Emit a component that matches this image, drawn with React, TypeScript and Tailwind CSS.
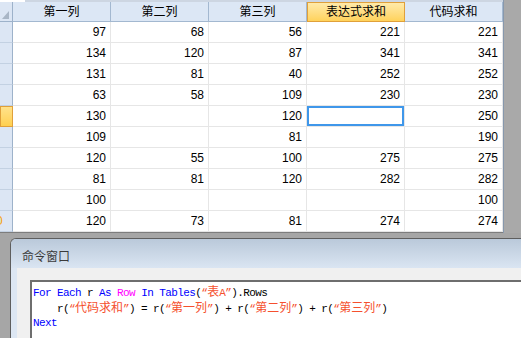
import React from 'react'

type Cell = number | ''

const rows: Cell[][] = [
  [97, 68, 56, 221, 221],
  [134, 120, 87, 341, 341],
  [131, 81, 40, 252, 252],
  [63, 58, 109, 230, 230],
  [130, '', 120, '', 250],
  [109, '', 81, '', 190],
  [120, 55, 100, 275, 275],
  [81, 81, 120, 282, 282],
  [100, '', '', '', 100],
  [120, 73, 81, 274, 274],
]

const headers = ['第一列', '第二列', '第三列', '表达式求和', '代码求和']

function Kw({ children }: { children: React.ReactNode }) {
  return <span className="text-[#0000ff]">{children}</span>
}

function Str({ children }: { children: React.ReactNode }) {
  return <span className="text-[#f5502e]">{children}</span>
}

// CJK chars need their own size so they come out 12px wide
function Zh({ children }: { children: React.ReactNode }) {
  return <span className="text-[12px] tracking-normal font-['Noto_Sans_CJK_SC',sans-serif]">{children}</span>
}

export default function App() {
  return (
    <div className="w-[521px] h-[338px] overflow-hidden bg-[#a6a6a6] flex flex-col font-['Liberation_Sans','Noto_Sans_CJK_SC',sans-serif] text-[12px] text-black">
      {/* Data grid */}
      <div className="flex h-[233px] shrink-0">
        <div className="w-[503px] flex flex-col bg-white border-b border-[#7d7d7d]">
          <div className="flex h-[2px]">
            <div className="w-[25px] bg-white" />
            <div className="flex-1 bg-[#cdd6e2]" />
          </div>

          {/* Header row */}
          <div className="flex h-[20px]">
            <div className="w-[13px] shrink-0 relative bg-[#dce6f4] border-r border-b border-[#9db2ca]">
              <svg className="absolute left-[2px] top-[9px]" width="7" height="8" viewBox="0 0 7 8">
                <path d="M7 0 L7 8 L0 8 Z" fill="#a9b6c6" />
              </svg>
            </div>
            {headers.map((h, i) =>
              i === 3 ? (
                <div
                  key={h}
                  className="w-[98px] shrink-0 flex items-center justify-center bg-gradient-to-b from-[#ffeaa8] to-[#ffd25a] border border-[#e0a03a] leading-[12px]"
                >
                  {h}
                </div>
              ) : (
                <div
                  key={h}
                  className="w-[98px] shrink-0 flex items-center justify-center bg-[#dce7f5] border-r border-b border-[#a3b8d0] leading-[12px]"
                >
                  {h}
                </div>
              )
            )}
          </div>

          {/* Data rows */}
          {rows.map((r, ri) => (
            <div key={ri} className="flex h-[21px]">
              {ri === 4 ? (
                <div className="w-[13px] shrink-0 bg-gradient-to-b from-[#ffe28a] to-[#ffd04f] border border-[#e0a03a]" />
              ) : (
                <div className="w-[13px] shrink-0 overflow-hidden bg-[#dce6f4] border-r border-b border-r-[#9db2ca] border-b-[#c3d1e2] leading-[20px]">
                  {ri === 9 && <span className="relative -left-[4px] text-[#f5a000]">0</span>}
                </div>
              )}
              {r.map((v, ci) => (
                <div
                  key={ci}
                  className="w-[98px] shrink-0 relative border-r border-b border-[#e6e6e6] text-right pr-[4px] leading-[20px]"
                >
                  {v}
                  {ri === 4 && ci === 3 && (
                    <div className="absolute inset-0 border-2 border-[#3f97ea]" />
                  )}
                </div>
              ))}
            </div>
          ))}
        </div>
        <div className="flex-1 bg-[#a9a9a9] border-l border-[#8798ad]" />
      </div>

      {/* Command window */}
      <div className="flex-1 pt-[5px] pl-[10px]">
        <div className="h-full rounded-tl-[6px] border-l border-t border-[#5e5e5e] flex flex-col bg-[#dde7f3] overflow-hidden">
          <div className="h-[29px] shrink-0 bg-gradient-to-b from-[#bac9da] to-[#dae5f2] pl-[11px] pt-[11px] leading-[12px] text-[#3a3a3a] font-['Noto_Sans_CJK_SC',sans-serif]">
            命令窗口
          </div>
          <div className="flex-1 ml-[6px] bg-[#f0f0f0] pt-[12px] pl-[13px]">
            <div className="h-full border-l-2 border-t-2 border-[#6e6e6e] bg-white pl-[1px] pt-[1px] font-['Liberation_Mono','Noto_Sans_CJK_SC',monospace] text-[11px] tracking-[-0.6px] whitespace-pre">
              <div className="h-[16px] leading-[16px]">
                <Kw>For</Kw> <Kw>Each</Kw> r <Kw>As</Kw> <span className="text-[#ff00ff]">Row</span> <Kw>In</Kw>{' '}
                <Kw>Tables</Kw>(<Str>“<Zh>表</Zh>A”</Str>).Rows
              </div>
              <div className="h-[16px] leading-[16px]">
                {'    r('}
                <Str>“<Zh>代码求和</Zh>”</Str>
                {') = r('}
                <Str>“<Zh>第一列</Zh>”</Str>
                {') + r('}
                <Str>“<Zh>第二列</Zh>”</Str>
                {') + r('}
                <Str>“<Zh>第三列</Zh>”</Str>
                {')'}
              </div>
              <div className="h-[16px] leading-[16px]">
                <Kw>Next</Kw>
              </div>
            </div>
          </div>
        </div>
      </div>
    </div>
  )
}
